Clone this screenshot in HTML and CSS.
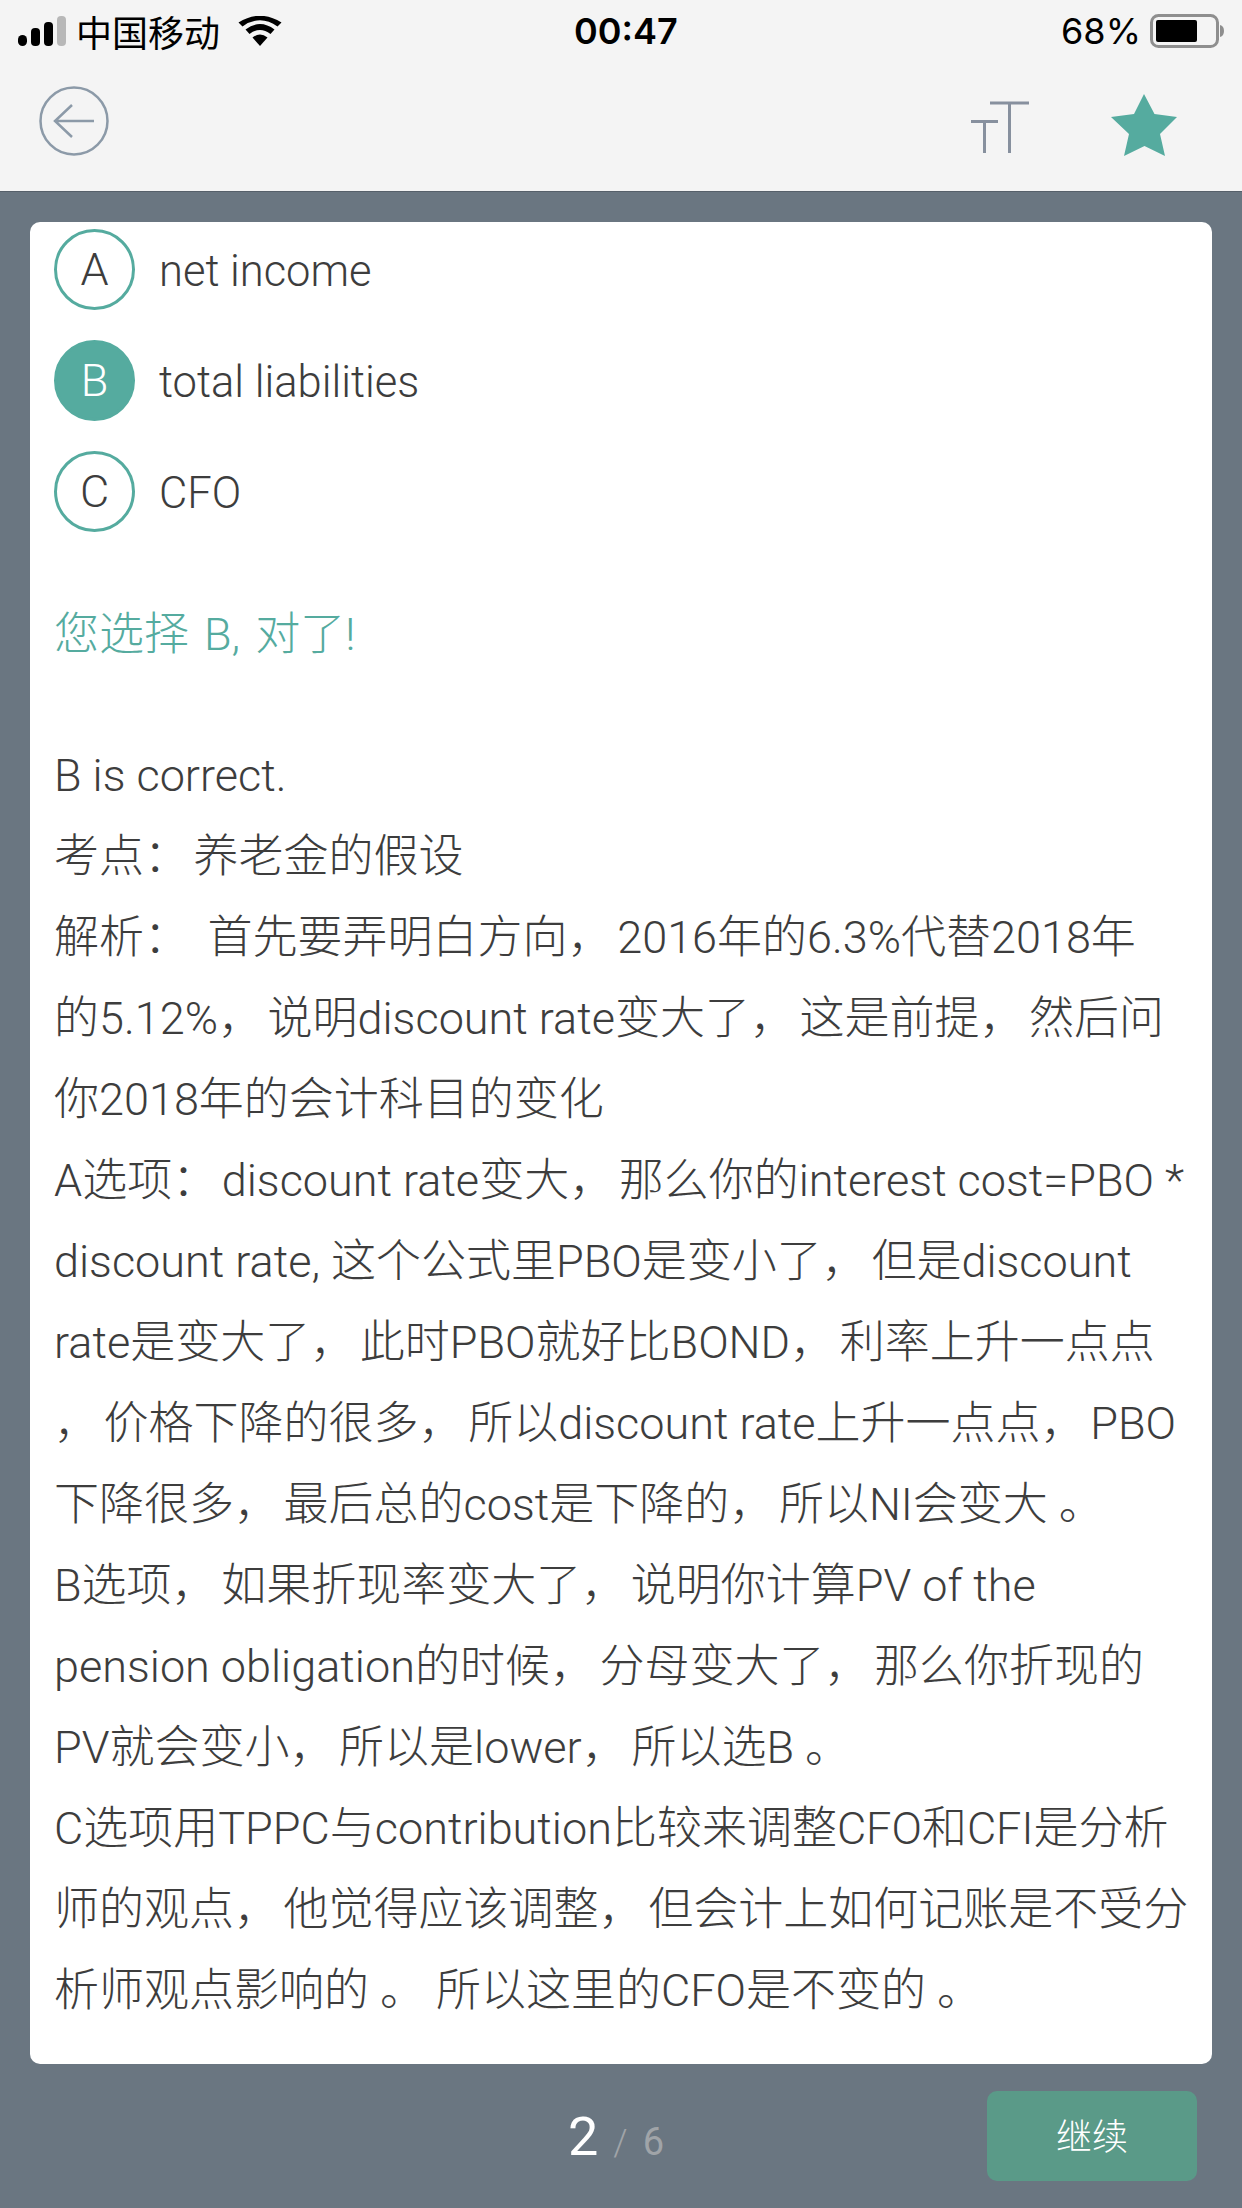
FILE: index.html
```html
<!DOCTYPE html>
<html lang="zh-CN">

<head>
    <meta charset="UTF-8">
    <title>Question</title>
    <link rel="stylesheet" href="styles.css">
</head>

<body>
    <header class="topBar">
        <div class="statusBar">
            <div class="statusLeft">
                <svg class="signal" width="48" height="30" viewBox="0 0 48 30">
                    <rect x="0" y="19" width="9" height="11" rx="4.5" fill="#000"/>
                    <rect x="13" y="12" width="9" height="18" rx="4" fill="#000"/>
                    <rect x="26" y="6" width="9" height="24" rx="4" fill="#000"/>
                    <rect x="39" y="0" width="9" height="30" rx="4" fill="#b8b8b8"/>
                </svg>
                <span class="carrier">中国移动</span>
                <svg class="wifi" width="44" height="30" viewBox="0 0 44 30">
                    <path d="M22 30 L14.5 21.5 Q22 15.5 29.5 21.5 Z" fill="#000"/>
                    <path d="M11.5 18 L7.5 13.5 Q22 2.5 36.5 13.5 L32.5 18 Q22 10 11.5 18 Z" fill="#000"/>
                    <path d="M4.5 10.5 L0.5 6.5 Q22 -7 43.5 6.5 L39.5 10.5 Q22 -2 4.5 10.5 Z" fill="#000"/>
                </svg>
            </div>
            <span class="clock">00:47</span>
            <div class="statusRight">
                <span class="percent">68%</span>
                <svg class="battery" width="74" height="34" viewBox="0 0 74 34">
                    <rect x="1.5" y="1.5" width="66" height="31" rx="7" fill="none" stroke="#8e8e8e" stroke-width="3"/>
                    <rect x="6" y="6" width="41" height="22" rx="2" fill="#000"/>
                    <path d="M70 11 Q74 12 74 17 Q74 22 70 23 Z" fill="#8e8e8e"/>
                </svg>
            </div>
        </div>
        <div class="navBar">
            <svg class="backIcon" width="70" height="70" viewBox="0 0 70 70">
                <circle cx="35" cy="35" r="33.5" fill="none" stroke="#8c9aa8" stroke-width="2.5"/>
                <path d="M55 35 H16 M33 19 L16 35 L33 51" fill="none" stroke="#8c9aa8" stroke-width="2.5"/>
            </svg>
            <svg class="fontIcon" width="58" height="52" viewBox="0 0 58 52">
                <path d="M0 20.5 H27 M13.5 20.5 V52 M19 2 H58 M38.5 2 V52" fill="none" stroke="#87909e" stroke-width="3"/>
            </svg>
            <svg class="starIcon" width="66" height="62" viewBox="0 0 66 62">
                <path d="M33 0 L43.5 20 L66 23 L49 40 L54 62 L33.500 52 L13 62 L18 40 L0 23 L23 20 Z" fill="#55ab9f"/>
            </svg>
        </div>
    </header>

    <main class="card">
        <div class="option">
            <span class="optionMark">A</span>
            <span class="optionText">net income</span>
        </div>
        <div class="option">
            <span class="optionMark selected">B</span>
            <span class="optionText">total liabilities</span>
        </div>
        <div class="option">
            <span class="optionMark">C</span>
            <span class="optionText">CFO</span>
        </div>

        <p class="verdict">您选择 B, 对了!</p>

        <div class="explain">
            <div>B is correct.</div>
            <div>考点：&#8202;养老金的假设</div>
            <div>解析： &#8198;首先要弄明白方向，&#8202;2016年的6.3%代替2018年</div>
            <div>的5.12%，&#8202;说明discount rate变大了，&#8202;这是前提，&#8202;然后问</div>
            <div>你2018年的会计科目的变化</div>
            <div>A选项：&#8202;discount rate变大，&#8202;那么你的interest cost=PBO *</div>
            <div>discount rate, 这个公式里PBO是变小了，&#8202;但是discount</div>
            <div>rate是变大了，&#8202;此时PBO就好比BOND，&#8202;利率上升一点点</div>
            <div>，&#8202;价格下降的很多，&#8202;所以discount rate上升一点点，&#8202;PBO</div>
            <div>下降很多，&#8202;最后总的cost是下降的，&#8202;所以NI会变大 。</div>
            <div>B选项，&#8202;如果折现率变大了，&#8202;说明你计算PV of the</div>
            <div>pension obligation的时候，&#8202;分母变大了，&#8202;那么你折现的</div>
            <div>PV就会变小，&#8202;所以是lower，&#8202;所以选B 。</div>
            <div>C选项用TPPC与contribution比较来调整CFO和CFI是分析</div>
            <div>师的观点，&#8202;他觉得应该调整，&#8202;但会计上如何记账是不受分</div>
            <div>析师观点影响的 。 所以这里的CFO是不变的 。</div>
        </div>
    </main>

    <footer class="bottomBar">
        <div class="pager">
            <span class="pageNow">2</span>
            <span class="pageSlash">/</span>
            <span class="pageRest">6</span>
        </div>
        <button class="nextButton">继续</button>
    </footer>
</body>

</html>
```

FILE: styles.css
```css
html,
body {
    margin: 0;
    padding: 0;
}

body {
    width: 1242px;
    height: 2208px;
    overflow: hidden;
    background: #6a7681;
    font-family: Roboto, "Noto Sans CJK SC", sans-serif;
    font-weight: 300;
    color: #3d3d3d;
}

/* top */
.topBar {
    height: 191px;
    background: #f4f4f4;
    border-bottom: 1px solid #56606a;
}

.statusBar {
    height: 62px;
    display: flex;
    align-items: center;
    justify-content: space-between;
    padding: 0 18px;
    position: relative;
    color: #000;
    font-family: Inter, "Noto Sans CJK SC", sans-serif;
}

.statusLeft,
.statusRight {
    display: flex;
    align-items: center;
}

.carrier {
    font-size: 36px;
    font-weight: 400;
    margin-left: 10px;
}

.wifi {
    margin-left: 18px;
}

.clock {
    position: absolute;
    left: 574px;
    font-size: 36px;
    font-weight: 600;
}

.percent {
    font-size: 36px;
    font-weight: 400;
    margin-right: 9px;
}

.navBar {
    display: flex;
    align-items: center;
    padding: 24px 65px 0 39px;
}

.fontIcon {
    margin-left: auto;
    margin-top: 12px;
}

.starIcon {
    margin-left: 82px;
    margin-top: 7px;
}

/* card */
.card {
    margin: 30px 30px 0;
    height: 1842px;
    box-sizing: border-box;
    padding: 7px 0 0 24px;
    background: #fff;
    border-radius: 10px;
    overflow: hidden;
}

.option {
    display: flex;
    align-items: center;
    height: 81px;
    margin-bottom: 30px;
    font-size: 43.5px;
}

.optionMark {
    width: 81px;
    height: 81px;
    box-sizing: border-box;
    display: flex;
    align-items: center;
    justify-content: center;
    border: 3px solid #55ab9f;
    border-radius: 50%;
    font-size: 45px;
}

.optionMark.selected {
    background: #55ab9f;
    color: #fff;
}

.optionText {
    margin-left: 24px;
    padding-top: 3px;
}

.verdict {
    margin: 62px 0 0;
    font-size: 45px;
    line-height: 81px;
    word-spacing: 4px;
    color: #55ab9f;
}

.explain {
    margin-top: 60px;
    font-size: 45px;
    line-height: 81px;
    white-space: nowrap;
}

/* bottom */
.bottomBar {
    height: 144px;
    display: flex;
    align-items: center;
    padding: 0 45px 0 568px;
}

.pager {
    display: flex;
    align-items: baseline;
}

.pageNow {
    font-size: 54px;
    font-weight: 400;
    color: #fff;
}

.pageSlash {
    margin-left: 15px;
    font-size: 36px;
    color: #a0a4a8;
}

.pageRest {
    margin-left: 15px;
    font-size: 38px;
    font-weight: 400;
    color: #a0a4a8;
}

.nextButton {
    margin-left: auto;
    width: 210px;
    height: 90px;
    padding: 0 0 4px;
    border: 0;
    border-radius: 10px;
    background: #5a9a88;
    color: #fff;
    font-family: inherit;
    font-weight: 300;
    font-size: 36px;
}
```
